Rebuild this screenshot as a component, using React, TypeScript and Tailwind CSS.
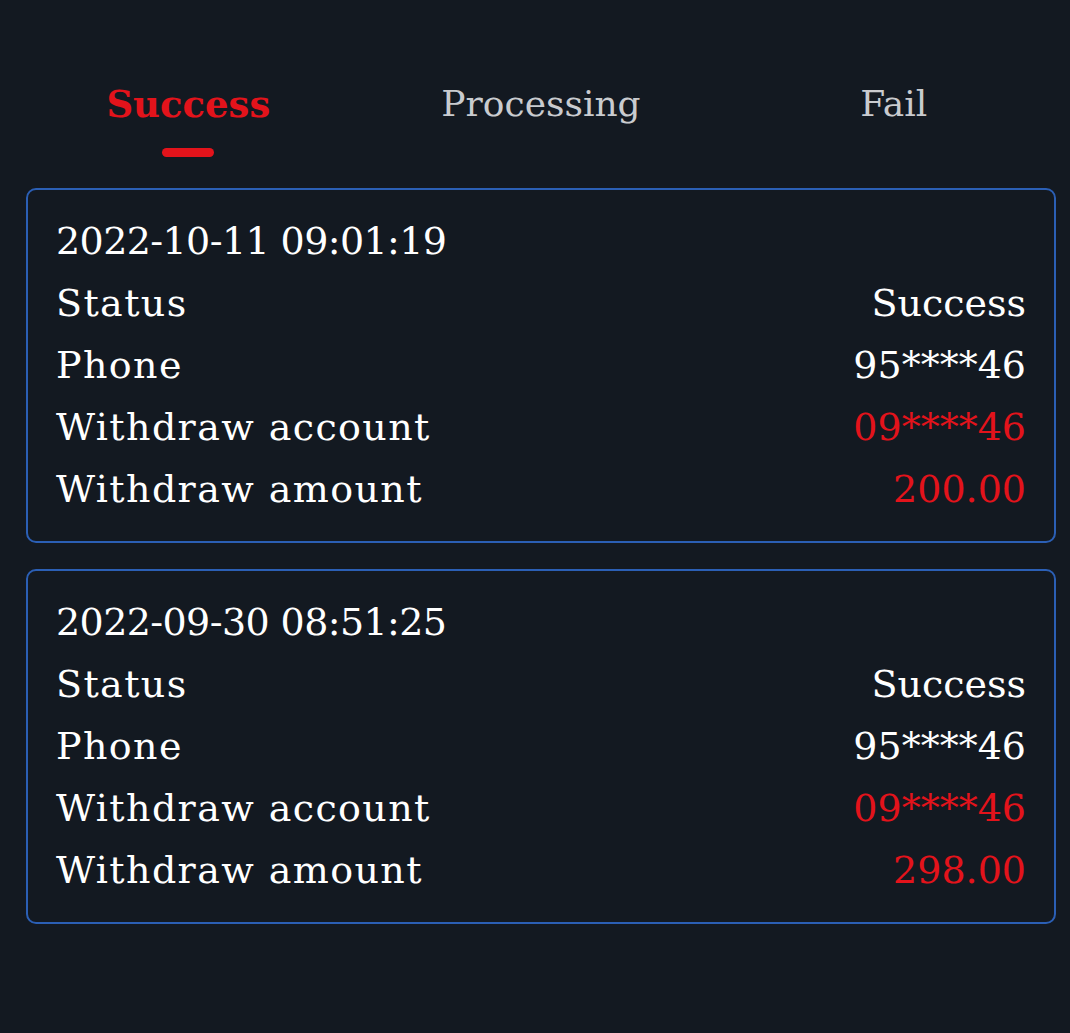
const records = [
  { time: '2022-10-11 09:01:19', status: 'Success', phone: '95****46', account: '09****46', amount: '200.00' },
  { time: '2022-09-30 08:51:25', status: 'Success', phone: '95****46', account: '09****46', amount: '298.00' },
];

const tabs = ['Success', 'Processing', 'Fail'];

function Row({ label, value, red }: { label: string; value: string; red?: boolean }) {
  return (
    <div className="flex justify-between">
      <span className="tracking-[1.4px]">{label}</span>
      <span className={red ? 'text-[#e3131b]' : ''}>{value}</span>
    </div>
  );
}

export default function App() {
  const active = 'Success';

  return (
    <div className="min-h-[1033px] w-full bg-[#131921] font-['DejaVu_Serif','Liberation_Serif',serif] text-white">
      {/* Tabs */}
      <div className="grid grid-cols-3 pl-[12px] pt-[78px]">
        {tabs.map((t) => {
          const isActive = t === active;
          return (
            <div key={t} className="flex flex-col items-center">
              <span
                className={
                  isActive
                    ? 'text-[37px] leading-[52px] font-bold text-[#e3131b]'
                    : 'text-[36px] leading-[52px] text-[#c9cbcf]'
                }
              >
                {t}
              </span>
              <span className={isActive ? 'mt-[18px] h-[9px] w-[52px] rounded-full bg-[#e3131b]' : 'mt-[18px] h-[9px] w-[52px]'} />
            </div>
          );
        })}
      </div>

      {/* Records */}
      <div className="flex flex-col gap-[26px] pl-[26px] pr-[14px] pt-[31px]">
        {records.map((r) => (
          <div
            key={r.time}
            className="rounded-[10px] border-2 border-[#2b5fb5] px-[28px] pt-[20px] pb-[21px] text-[38px] leading-[62px]"
          >
            <div className="tracking-[-0.6px]">{r.time}</div>
            <Row label="Status" value={r.status} />
            <Row label="Phone" value={r.phone} />
            <Row label="Withdraw account" value={r.account} red />
            <Row label="Withdraw amount" value={r.amount} red />
          </div>
        ))}
      </div>
    </div>
  );
}
